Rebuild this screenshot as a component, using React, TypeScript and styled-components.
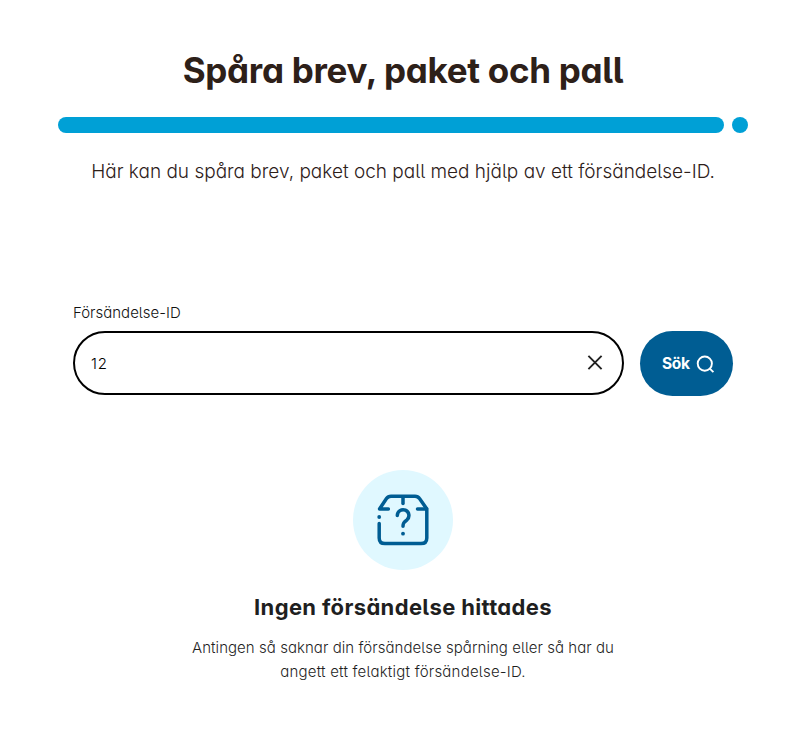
import React, { useState } from "react";
import styled, { createGlobalStyle } from "styled-components";

const GlobalStyle = createGlobalStyle`
  *, *::before, *::after { box-sizing: border-box; }
  body {
    margin: 0;
    background: #fff;
    color: #2d2019;
    font-family: Inter, Lato, "Liberation Sans", sans-serif;
    font-feature-settings: "cv11", "cv05";
  }
`;

const Page = styled.main`
  width: 690px;
  margin: 0 0 0 58px;
  padding-top: 47px;
  display: flex;
  flex-direction: column;
  align-items: stretch;
`;

const Title = styled.h1`
  margin: 0;
  height: 46px;
  font-size: 35px;
  line-height: 46px;
  font-weight: 650;
  letter-spacing: -0.3px;
  text-align: center;
  white-space: nowrap;
`;

const Divider = styled.div`
  display: flex;
  gap: 8px;
  margin-top: 24px;
  height: 16px;
`;

const Bar = styled.span`
  flex: 1;
  border-radius: 8px;
  background: #00a0d6;
`;

const Dot = styled.span`
  width: 16px;
  border-radius: 50%;
  background: #00a0d6;
`;

const Lead = styled.p`
  margin: 24px 0 0;
  font-size: 19px;
  line-height: 30px;
  font-weight: 300;
  text-align: center;
  white-space: nowrap;
`;

const SearchForm = styled.form`
  margin: 114px 15px 0;
  display: grid;
  grid-template-columns: 551px 93px;
  column-gap: 16px;
`;

const Label = styled.label`
  grid-column: 1 / -1;
  height: 30px;
  font-size: 15px;
  line-height: 24px;
  font-weight: 300;
  color: #111;
`;

const Field = styled.div`
  height: 64px;
  display: flex;
  align-items: center;
  padding: 0 18px 0 16px;
  border: 2px solid #000;
  border-radius: 32px;
`;

const Input = styled.input`
  flex: 1;
  min-width: 0;
  padding: 0;
  border: 0;
  outline: 0;
  background: transparent;
  font: inherit;
  font-size: 15px;
  font-weight: 300;
  letter-spacing: 0.9px;
  color: #000;
`;

const ClearButton = styled.button`
  display: flex;
  padding: 0;
  border: 0;
  background: none;
`;

const SubmitButton = styled.button`
  height: 65px;
  display: flex;
  align-items: center;
  gap: 6px;
  padding: 0 0 0 22px;
  border: 0;
  border-radius: 33px;
  background: #005d93;
  color: #fff;
  font: inherit;
  font-size: 15.5px;
  font-weight: 700;
  letter-spacing: -0.3px;
`;

const Result = styled.section`
  margin-top: 74px;
  display: flex;
  flex-direction: column;
  align-items: center;
  color: #1f1f1f;
`;

const IconCircle = styled.div`
  width: 100px;
  height: 100px;
  border-radius: 50%;
  background: #e0f8ff;
`;

const ResultTitle = styled.h2`
  margin: 21px 0 0;
  font-size: 22px;
  line-height: 32px;
  font-weight: 650;
  letter-spacing: 0.35px;
  white-space: nowrap;
`;

const Message = styled.p`
  margin: 13px 0 0;
  font-size: 15px;
  line-height: 24px;
  font-weight: 300;
  text-align: center;
  white-space: nowrap;
`;

const MessageLine = styled.span<{ $tracking: number }>`
  display: block;
  letter-spacing: ${(p) => p.$tracking}px;
`;

const BoxIcon = () => (
  <svg width="100" height="100" viewBox="0 0 100 100" fill="none" stroke="#005d93" strokeWidth="3.5" strokeLinecap="round" strokeLinejoin="round">
    <path d="M35.4 39H26.5L33.5 28.5Q35 26.2 38 26.2H62Q65 26.2 66.5 28.5L73.5 38.5" />
    <path d="M64.5 39H73.8V68Q73.8 73.6 68 73.6H32Q26.2 73.6 26.2 68V53.5" />
    <path d="M50 27V33.5" />
    <path d="M44.3 45.5A5.8 5.8 0 1 1 54 49.8C51 52.3 50 53 50 56.3" />
    <circle cx="26.2" cy="47" r="1.9" fill="#005d93" stroke="none" />
    <circle cx="50" cy="63.7" r="1.9" fill="#005d93" stroke="none" />
  </svg>
);

const CloseIcon = () => (
  <svg width="18" height="18" viewBox="0 0 18 18" fill="none" stroke="#222" strokeWidth="1.9">
    <path d="M2.4 1.9L15.6 15.1M15.6 1.9L2.4 15.1" />
  </svg>
);

const SearchIcon = () => (
  <svg width="20" height="20" viewBox="0 0 20 20" fill="none" stroke="#fff" strokeWidth="1.9">
    <circle cx="8.8" cy="9.6" r="7.1" />
    <path d="M13.3 14.1L17.4 18.2" />
  </svg>
);

export default function App() {
  const [query, setQuery] = useState("12");
  return (
    <>
      <GlobalStyle />
      <Page>
        <Title>Spåra brev, paket och pall</Title>
        <Divider>
          <Bar />
          <Dot />
        </Divider>
        <Lead>Här kan du spåra brev, paket och pall med hjälp av ett försändelse-ID.</Lead>
        <SearchForm onSubmit={(e) => e.preventDefault()}>
          <Label htmlFor="shipment">Försändelse-ID</Label>
          <Field>
            <Input id="shipment" value={query} onChange={(e) => setQuery(e.target.value)} />
            <ClearButton type="button" aria-label="Rensa" onClick={() => setQuery("")}>
              <CloseIcon />
            </ClearButton>
          </Field>
          <SubmitButton type="submit">
            Sök
            <SearchIcon />
          </SubmitButton>
        </SearchForm>
        <Result>
          <IconCircle>
            <BoxIcon />
          </IconCircle>
          <ResultTitle>Ingen försändelse hittades</ResultTitle>
          <Message>
            <MessageLine $tracking={0.05}>Antingen så saknar din försändelse spårning eller så har du</MessageLine>
            <MessageLine $tracking={0.22}>angett ett felaktigt försändelse-ID.</MessageLine>
          </Message>
        </Result>
      </Page>
    </>
  );
}
